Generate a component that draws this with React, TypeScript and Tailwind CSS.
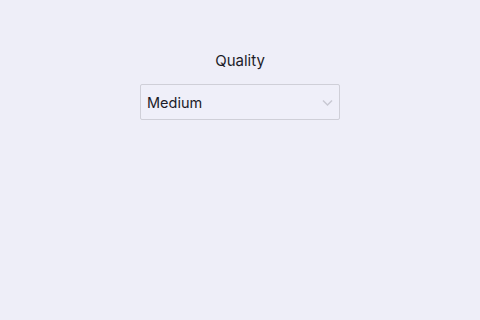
import React from "react";

export default function App() {
  return (
    <div className="w-[480px] h-[320px] bg-[#eeeef8] flex flex-col items-center pt-[51px]" style={{ fontFamily: "Inter, 'Noto Sans', sans-serif" }}>
      <div className="text-[15px] leading-[20px] text-[#1c1c28]">Quality</div>
      <div className="mt-[13px] w-[200px] h-[36px] border border-[#cfcfd8] rounded-[2px] bg-[#efeff9] flex items-center justify-between pl-[6px] pr-[6px] pt-[1px]">
        <span className="text-[14.5px] text-[#1c1c28]">Medium</span>
        <svg width="11" height="8" viewBox="0 0 11 8" fill="none">
          <path d="M1 1.5 L5.5 6 L10 1.5" stroke="#c8c8d2" strokeWidth="1.4" />
        </svg>
      </div>
    </div>
  );
}
